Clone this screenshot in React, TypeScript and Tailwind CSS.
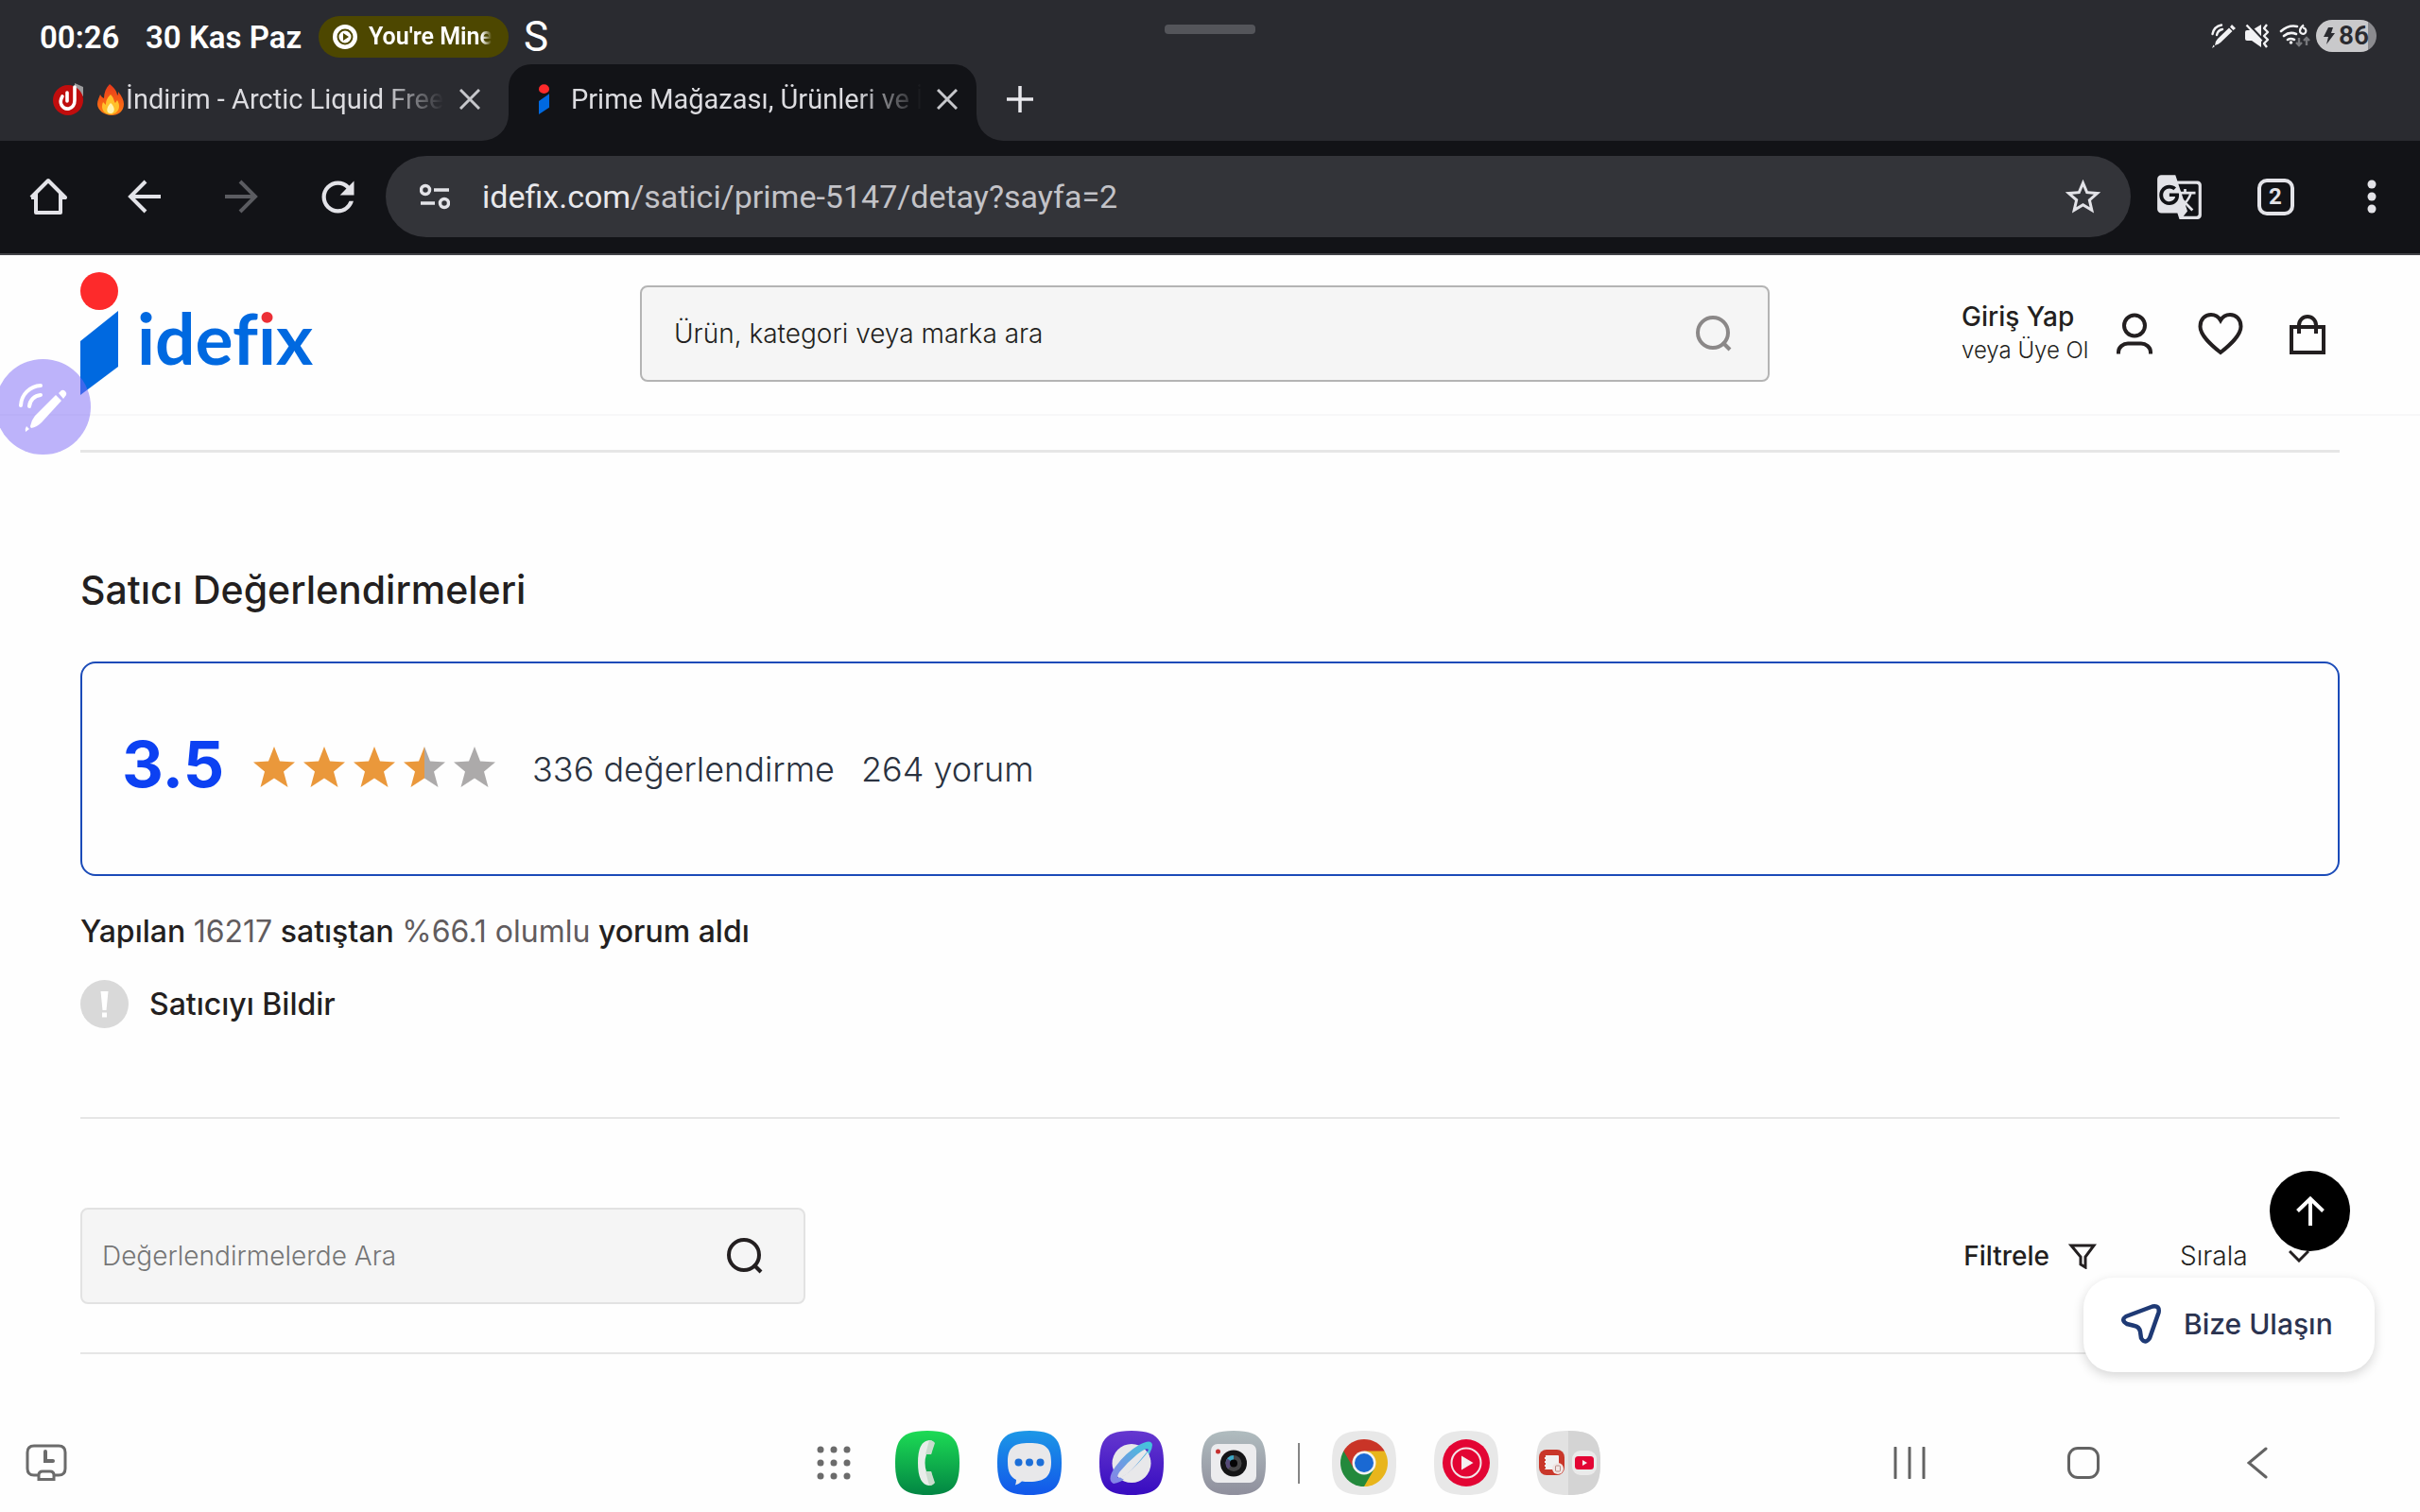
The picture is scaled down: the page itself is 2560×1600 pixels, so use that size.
import React from "react";
import { MdGTranslate, MdRefresh, MdStarBorder } from "react-icons/md";

const SQUIRCLE = "M34 0C60 0 68 8 68 34S60 68 34 68 0 60 0 34 8 0 34 0Z";

function PenSignal({ className }: { className: string }) {
  return (
    <svg viewBox="0 0 52 52" className={className} fill="none" aria-hidden="true">
      <path d="M2 24A22 22 0 0 1 23 3M11 25A13 13 0 0 1 23 13" stroke="currentColor" strokeWidth="4" strokeLinecap="round" />
      <path d="M39 13l6 6-21 23q-5 5-11 6-1-1-1-2 1-6 5-11z" fill="currentColor" />
      <path d="M42 11l3-3q2-1 4 1t1 4l-3 4zM8 46l3 3-4 3q-1-3 1-6z" fill="currentColor" />
    </svg>
  );
}

function StatusPen() {
  return (
    <svg viewBox="0 0 26 26" className="h-[26px] w-[26px]" fill="none" aria-hidden="true">
      <path d="M1.500 11Q3 3 11 1.500M6 12Q7 7 12 6" stroke="#f2f2f4" strokeWidth="2.400" strokeLinecap="round" />
      <path d="M19 4.500l3.500 3.500L10 20q-2 2-6 3 0-4 3-7zM20 3.500L22 1l4 4-2.500 2zM2.500 22.500L4 24l-3 2z" fill="#f2f2f4" />
    </svg>
  );
}

function MuteIcon() {
  return (
    <svg viewBox="0 0 26 26" className="h-[26px] w-[26px]" fill="none" aria-hidden="true">
      <path d="M0 9q0-2 2-2h5l10-6v24l-10-7H2q-2 0-2-2z" fill="#f2f2f4" />
      <path d="M3 0l16 17" stroke="#2a2b30" strokeWidth="2.400" />
      <path d="M1.500 1.500l16 17" stroke="#f2f2f4" strokeWidth="2.400" />
      <path d="M23 1l-3 4 4 4-4 4 4 4-4 4 3 4" stroke="#f2f2f4" strokeWidth="2.4" strokeLinejoin="round" />
    </svg>
  );
}

function WifiIcon() {
  return (
    <svg viewBox="0 0 34 26" className="h-[26px] w-[34px]" fill="none" aria-hidden="true">
      <path d="M2 8q8-7 17-5M5 13q6-5 13-2M9 17q3-2 7 0" stroke="#f2f2f4" strokeWidth="2.6" strokeLinecap="round" />
      <circle cx="12.500" cy="20" r="1.800" fill="#f2f2f4" />
      <path d="M26 1.500q-4 3-4 6a3.200 3.200 0 1 0 3-3" stroke="#f2f2f4" strokeWidth="2.200" />
      <path d="M21 15v8m-3-3l3 3 3-3M29 23v-8m-3 3l3-3 3 3" stroke="#77787c" strokeWidth="2.400" />
    </svg>
  );
}

function StatusBar() {
  return (
    <div className="relative flex h-[68px] items-start bg-[#2a2b30] pl-[42px] pr-[46px] pt-4 text-white">
      <div className="flex h-[46px] items-center text-[33px] font-semibold leading-none">
        <span className="w-28">00:26</span>
        <span className="w-[183px]">30 Kas Paz</span>
        <span className="flex h-11 w-[201px] items-center gap-3 rounded-full bg-[#4d4700] pl-[15px]">
          <svg viewBox="0 0 26 26" className="h-[26px] w-[26px] shrink-0" aria-hidden="true">
            <circle cx="13" cy="13" r="13" fill="#fff" />
            <circle cx="13" cy="13" r="7.500" fill="none" stroke="#4d4700" strokeWidth="2" />
            <path d="M11 9l6 4-6 4z" fill="#4d4700" />
          </svg>
          <span className="w-[130px] overflow-hidden whitespace-nowrap text-[25px] leading-8 [mask-image:linear-gradient(to_right,black_92%,transparent)]">
            You're Mine
          </span>
        </span>
        <span className="ml-4 text-[44px] font-normal leading-none">S</span>
      </div>
      <div className="absolute left-1/2 top-[26px] h-[10px] w-24 -translate-x-1/2 rounded-[4px] bg-[#54555a]" />
      <div className="ml-auto flex h-11 items-center gap-[10px]">
        <StatusPen />
        <MuteIcon />
        <div className="flex items-center gap-[5px]">
          <WifiIcon />
          <span className="flex h-[34px] w-16 items-center justify-center gap-1 rounded-full bg-linear-to-r from-[#c9c9cb] from-86% to-[#8b8b8f] to-86% text-[28px] font-semibold leading-none text-[#2a2b30]">
            <svg viewBox="0 0 12 18" className="h-[18px] w-3" aria-hidden="true">
              <path d="M5 0h5L8 6h4L3 18l2-8H0z" fill="currentColor" />
            </svg>
            86
          </span>
        </div>
      </div>
    </div>
  );
}

function CloseIcon() {
  return (
    <svg viewBox="0 0 22 22" className="h-[22px] w-[22px]" aria-hidden="true">
      <path d="M1 1l20 20M21 1L1 21" stroke="#c6c7cb" strokeWidth="3" />
    </svg>
  );
}

function TabStrip() {
  return (
    <div className="flex h-[81px] bg-[#121317] text-[29px] text-[#dcdce0]">
      <div className="flex w-[538px] items-center rounded-br-[28px] bg-[#2a2b30] pb-2 pl-[55px]">
        <svg viewBox="0 0 34 34" className="h-[34px] w-[34px] shrink-0" aria-hidden="true">
          <path d="M24 0l9 4v10l-9-6z" fill="#9b9b9d" />
          <circle cx="17" cy="18" r="16" fill="#c00d0d" />
          <path d="M11 14q-3 5-1 9 3 5 8 4 6-2 6-9V4M16 10v9" stroke="#fff" strokeWidth="3.600" fill="none" strokeLinecap="round" />
        </svg>
        <svg viewBox="0 0 28 34" className="ml-[14px] h-[34px] w-7 shrink-0" aria-hidden="true">
          <defs>
            <linearGradient id="flame" x1="0" y1="0" x2="0" y2="1">
              <stop offset="0" stopColor="#e8381b" />
              <stop offset="1" stopColor="#ff7d12" />
            </linearGradient>
          </defs>
          <path d="M13 1c5 4 8 8 8 12 1-1 1-2 1-4 4 5 6 9 6 13 0 8-6 12-13 12S0 29 0 22c0-4 2-7 3-10 1 2 2 3 4 4 0-6 2-11 6-15z" fill="url(#flame)" />
          <path d="M14 12c4 4 3 7 5 9l2-3c5 8 0 15-7 15S3 27 6 20l3 3c0-4 1-7 5-11z" fill="#ffc02b" />
          <path d="M14 21c5 4 5 11 0 11s-5-6 0-11z" fill="#fff3b0" />
        </svg>
        <span className="ml-[2px] w-[340px] overflow-hidden whitespace-nowrap leading-10 [mask-image:linear-gradient(to_right,black_80%,transparent_99%)]">
          İndirim - Arctic Liquid Freezer
        </span>
        <button type="button" aria-label="Sekmeyi kapat" className="ml-[13px]">
          <CloseIcon />
        </button>
      </div>
      <div className="w-[495px] bg-[#2a2b30]">
        <div className="flex h-full items-center rounded-t-[24px] bg-[#121317] pb-2 pl-8">
          <svg viewBox="0 0 40 131" className="h-8 w-[11px]" preserveAspectRatio="none" aria-hidden="true">
            <circle cx="20" cy="21" r="20" fill="#fd2a2b" />
            <path d="M0 74L40 42V101L0 131z" fill="#0069e0" />
          </svg>
          <span className="ml-[23px] w-[375px] overflow-hidden whitespace-nowrap leading-10 [mask-image:linear-gradient(to_right,black_80%,transparent_99%)]">
            Prime Mağazası, Ürünleri ve İndirimleri
          </span>
          <button type="button" aria-label="Sekmeyi kapat" className="ml-[12px]">
            <CloseIcon />
          </button>
        </div>
      </div>
      <div className="flex flex-1 items-center rounded-bl-[28px] bg-[#2a2b30] pb-2 pl-[31px]">
        <button type="button" aria-label="Yeni sekme">
          <svg viewBox="0 0 30 30" className="h-[30px] w-[30px]" aria-hidden="true">
            <path d="M15 1v28M1 15h28" stroke="#e8e8ec" strokeWidth="3.500" />
          </svg>
        </button>
      </div>
    </div>
  );
}

function ToolButton({ label, children }: { label: string; children: React.ReactNode }) {
  return (
    <button type="button" aria-label={label} className="flex h-[86px] w-[102px] shrink-0 items-center justify-center text-[#e3e3e8]">
      {children}
    </button>
  );
}

function Toolbar() {
  return (
    <div className="flex items-center border-b-2 border-[#414247] bg-[#121317] pb-[17px] pt-4">
      <ToolButton label="Ana sayfa">
        <svg viewBox="0 0 40 40" className="h-10 w-10" fill="none" stroke="currentColor" strokeWidth="4" strokeLinejoin="round" aria-hidden="true">
          <path d="M7 17V37H33V17M2 21L20 3L38 21H33M7 21H2" />
        </svg>
      </ToolButton>
      <ToolButton label="Geri">
        <svg viewBox="0 0 36 36" className="h-9 w-9" fill="none" stroke="currentColor" strokeWidth="4" aria-hidden="true">
          <path d="M35 18H4M19 2L3 18l16 16" />
        </svg>
      </ToolButton>
      <ToolButton label="İleri">
        <svg viewBox="0 0 36 36" className="h-9 w-9 text-[#5b5c61]" fill="none" stroke="currentColor" strokeWidth="4" aria-hidden="true">
          <path d="M1 18h31M17 2l16 16-16 16" />
        </svg>
      </ToolButton>
      <ToolButton label="Yenile">
        <MdRefresh className="h-[51px] w-[51px]" />
      </ToolButton>
      <div className="flex h-[86px] flex-1 items-center rounded-full bg-[#333439] pl-9">
        <button type="button" aria-label="Site bilgileri">
          <svg viewBox="0 0 32 28" className="h-7 w-8" fill="none" stroke="#e3e3e8" strokeWidth="3.500" aria-hidden="true">
            <circle cx="6" cy="7" r="4.500" />
            <circle cx="26" cy="21" r="4.500" />
            <path d="M15 7h16M1 21h15" />
          </svg>
        </button>
        <div className="ml-[34px] flex-1 whitespace-nowrap text-[34px] leading-[44px] text-[#c3c3c8]">
          <span className="text-[#e8e8ec]">idefix.com</span>/satici/prime-5147/detay?sayfa=2
        </div>
        <ToolButton label="Yer işareti ekle">
          <MdStarBorder className="h-[45px] w-[45px]" />
        </ToolButton>
      </div>
      <ToolButton label="Çevir">
        <MdGTranslate className="h-[51px] w-[51px]" />
      </ToolButton>
      <ToolButton label="Sekmeler">
        <span className="flex h-[39px] w-[39px] items-center justify-center rounded-[10px] border-4 border-current text-[24px] font-bold leading-none">2</span>
      </ToolButton>
      <ToolButton label="Menü">
        <svg viewBox="0 0 10 36" className="h-9 w-[10px]" fill="currentColor" aria-hidden="true">
          <circle cx="5" cy="5" r="4.500" />
          <circle cx="5" cy="18" r="4.500" />
          <circle cx="5" cy="31" r="4.500" />
        </svg>
      </ToolButton>
    </div>
  );
}

function SearchGlyph({ className }: { className: string }) {
  return (
    <svg viewBox="0 0 38 38" className={className} fill="none" stroke="currentColor" strokeWidth="4" aria-hidden="true">
      <circle cx="18" cy="18" r="16" />
      <path d="M28 28l8 8" />
    </svg>
  );
}

function SiteHeader() {
  return (
    <header className="flex h-[170px] items-start border-b-2 border-[#f7f7f8] px-[85px]">
      <div className="w-[592px] pt-[17px]">
        <a href="#anasayfa" className="flex w-fit items-start">
          <svg viewBox="0 0 40 131" className="h-[131px] w-10" aria-hidden="true">
            <circle cx="20" cy="21" r="20" fill="#fd2a2b" />
            <path d="M0 74L40 42V101L0 131z" fill="#0069e0" />
          </svg>
          <span className="ml-5 mt-7 font-['Lato'] text-[75px] font-bold leading-[84px] text-[#0069e0]">
            <span>idef</span>
            <span className="inline-block bg-linear-to-b from-[#ec2f36] from-38% to-[#0069e0] to-38% bg-clip-text text-transparent">i</span>
            <span>x</span>
          </span>
        </a>
      </div>
      <form className="relative mt-8 w-1/2">
        <input
          aria-label="Ürün, kategori veya marka ara"
          placeholder="Ürün, kategori veya marka ara"
          className="h-[102px] w-full rounded-[8px] border-2 border-[#b4b4b4] bg-[#f5f5f5] pl-[34px] text-[28px] font-light placeholder:text-[#231f20] placeholder:opacity-100"
        />
        <button type="button" aria-label="Ara" className="absolute right-10 top-8 text-[#8b8888]">
          <SearchGlyph className="h-[38px] w-[38px]" />
        </button>
      </form>
      <div className="ml-auto mr-[14px] mt-[47px] flex items-center text-[#231f20]">
        <a href="#giris" className="w-[164px] whitespace-nowrap">
          <span className="block text-[28px] font-medium leading-9">Giriş Yap</span>
          <span className="block text-[24px] font-light leading-9">veya Üye Ol</span>
        </a>
        <button type="button" aria-label="Hesabım">
          <svg viewBox="0 0 38 44" className="h-11 w-[38px]" fill="none" stroke="currentColor" strokeWidth="4" aria-hidden="true">
            <circle cx="19" cy="13.500" r="11" />
            <path d="M2 43.500v-2c0-5 5-9 10-9h14c5 0 10 4 10 9v2" />
          </svg>
        </button>
        <button type="button" aria-label="Favorilerim" className="ml-12">
          <svg viewBox="0 0 48 46" className="h-[46px] w-12" fill="none" stroke="currentColor" strokeWidth="4" aria-hidden="true">
            <path d="M24 43C14 35 2.500 25 2.500 15.500 2.500 8 7.500 3 14 3c4.500 0 8 2.500 10 6 2-3.500 5.500-6 10-6 6.500 0 11.500 5 11.500 12.500C45.500 25 34 35 24 43z" />
          </svg>
        </button>
        <button type="button" aria-label="Sepetim" className="ml-12">
          <svg viewBox="0 0 40 44" className="h-11 w-10" fill="none" stroke="currentColor" strokeWidth="4" aria-hidden="true">
            <path d="M3 15h34v27H3zM11 22v-9c0-5 4-9 9-9s9 4 9 9v9" />
          </svg>
        </button>
      </div>
    </header>
  );
}

const STARS = [100, 100, 100, 50, 0];

function Star({ fill }: { fill: number }) {
  const shape = "M22 0L28 15.500 44 16.500 32 26.500 36.500 43 22 33.500 7.500 43 12 26.500 0 16.500 16 15.500Z";
  return (
    <svg viewBox="0 0 44 43" className="h-[43px] w-11" aria-hidden="true">
      <defs>
        <linearGradient id={"star" + fill}>
          <stop offset={fill + "%"} stopColor="#ea983b" />
          <stop offset={fill + "%"} stopColor="#acaaaa" />
        </linearGradient>
      </defs>
      <path d={shape} fill={"url(#star" + fill + ")"} />
    </svg>
  );
}

function SellerReviews() {
  return (
    <main className="px-[85px] pt-9 text-[#231f20]">
      <hr className="h-[3px] border-0 bg-[#e6e6e6]" />
      <h1 className="mt-[121px] text-[41px] font-medium leading-[48px]">Satıcı Değerlendirmeleri</h1>
      <section className="mt-[52px] flex h-[227px] items-center rounded-[16px] border-2 border-[#1b4bb8] pl-[42px] text-[36px] font-light text-[#2a3240]">
        <strong className="mb-3 w-[139px] text-[68px] font-bold leading-[88px] text-[#0c41f2]">3.5</strong>
        <div role="img" aria-label="5 üzerinden 3.5" className="mb-1 flex gap-[9px]">
          {STARS.map((fill, i) => (
            <Star key={i} fill={fill} />
          ))}
        </div>
        <span className="ml-[39px]">336 değerlendirme</span>
        <span className="ml-7">264 yorum</span>
      </section>
      <p className="mt-[39px] text-[32px] font-medium leading-10">
        Yapılan <span className="font-normal text-[#615c5e]">16217</span> satıştan{" "}
        <span className="font-normal text-[#615c5e]">%66.1 olumlu</span> yorum aldı
      </p>
      <button type="button" className="mt-[31px] flex items-center gap-[22px] text-[32px] font-medium leading-[51px]">
        <svg viewBox="0 0 51 51" className="h-[51px] w-[51px]" aria-hidden="true">
          <circle cx="25.500" cy="25.500" r="25.500" fill="#d9d9d9" />
          <path d="M21.500 12h8l-2 20h-4zM23 34.500h5v5h-5z" fill="#fff" />
        </svg>
        Satıcıyı Bildir
      </button>
      <hr className="mt-[94px] h-[2px] border-0 bg-[#e6e6e6]" />
      <div className="mt-[94px] flex items-center">
        <form className="relative w-[767px]">
          <input
            aria-label="Değerlendirmelerde Ara"
            placeholder="Değerlendirmelerde Ara"
            className="h-[102px] w-full rounded-[8px] border-2 border-[#e2e2e2] bg-[#f5f5f5] pl-[21px] text-[28px] font-light placeholder:text-[#757575] placeholder:opacity-100"
          />
          <button type="button" aria-label="Ara" className="absolute right-[45px] top-8">
            <SearchGlyph className="h-[38px] w-[38px]" />
          </button>
        </form>
        <button type="button" className="ml-auto flex items-center gap-5 text-[28px] font-medium">
          Filtrele
          <svg viewBox="0 0 30 27" className="h-[27px] w-[30px]" fill="none" stroke="currentColor" strokeWidth="3" aria-hidden="true">
            <path d="M3 2h24L18 14v11l-5-3v-8z" />
          </svg>
        </button>
        <label className="relative ml-[88px] mr-8 flex items-center">
          <select aria-label="Sırala" className="w-[137px] appearance-none bg-transparent text-[28px] font-light">
            <option>Sırala</option>
          </select>
          <svg viewBox="0 0 22 13" className="pointer-events-none absolute right-0 h-[13px] w-[22px]" fill="none" stroke="currentColor" strokeWidth="3" aria-hidden="true">
            <path d="M1 1l10 10L21 1" />
          </svg>
        </label>
      </div>
      <hr className="mt-[51px] h-[2px] border-0 bg-[#e6e6e6]" />
    </main>
  );
}

function FloatingActions() {
  return (
    <>
      <button type="button" aria-label="Yukarı çık" className="absolute bottom-[276px] right-[74px] flex h-[85px] w-[85px] items-center justify-center rounded-full bg-black">
        <svg viewBox="0 0 30 31" className="h-[31px] w-[30px]" fill="none" stroke="#fff" strokeWidth="4" aria-hidden="true">
          <path d="M15 31V3M1.500 15.500L15 2.500l13.500 13" />
        </svg>
      </button>
      <button type="button" className="absolute bottom-[148px] right-12 flex h-[100px] w-[308px] items-center rounded-[32px] bg-white pb-[2px] pl-10 text-[30px] font-medium text-[#2b3350] shadow-[0_4px_12px_rgba(0,0,0,0.16)]">
        <svg viewBox="0 0 42 42" className="mr-6 h-[42px] w-[42px]" fill="none" stroke="#1f3a75" strokeWidth="4.500" strokeLinejoin="round" aria-hidden="true">
          <path d="M5 13L33 2.500Q41 1 39.500 9L30 36Q25 43 21 36L20 29Q19 24 14 23L6 21Q-1 17 5 13Z" />
        </svg>
        Bize Ulaşın
      </button>
      <button type="button" aria-label="Kalem menüsü" className="absolute -left-[5px] top-[380px] flex h-[101px] w-[101px] items-center justify-center rounded-full bg-[#7b67f5]/50 text-white">
        <PenSignal className="h-[52px] w-[52px]" />
      </button>
    </>
  );
}

function AppIcon({ label, children }: { label: string; children: React.ReactNode }) {
  return (
    <button type="button" aria-label={label}>
      <svg viewBox="0 0 68 68" className="h-[68px] w-[68px]" aria-hidden="true">
        {children}
      </svg>
    </button>
  );
}

function Gradient({ id, from, to }: { id: string; from: string; to: string }) {
  return (
    <linearGradient id={id} x1="0" y1="0" x2="0" y2="1">
      <stop offset="0" stopColor={from} />
      <stop offset="1" stopColor={to} />
    </linearGradient>
  );
}

const DOTS = [4, 18, 32];

function Dock() {
  return (
    <div className="flex items-center gap-10 pr-[3px]">
      <button type="button" aria-label="Uygulamalar" className="mr-[7px]">
        <svg viewBox="0 0 36 36" className="h-9 w-9" fill="#6b6b6b" aria-hidden="true">
          {DOTS.map((y) => DOTS.map((x) => <circle key={x + "-" + y} cx={x} cy={y} r="3.500" />))}
        </svg>
      </button>
      <AppIcon label="Telefon">
        <defs><Gradient id="phone" from="#1ddb55" to="#028543" /></defs>
        <path d={SQUIRCLE} fill="url(#phone)" />
        <path d="M36 10Q24 11 24 34T36 58Q39 58 40 56L38 43H33Q30 34 33 25H38L40 12Q39 10 36 10z" fill="#e9edea" />
        <path d="M36 10q4 0 6 3l-4 12h-6zM32 43h6l4 12q-2 3-6 3z" fill="#c9dccd" />
      </AppIcon>
      <AppIcon label="Mesajlar">
        <defs><Gradient id="messages" from="#1c97e6" to="#1257ea" /></defs>
        <path d={SQUIRCLE} fill="url(#messages)" />
        <path d="M34 13c17 0 23 5 23 20S51 54 34 54q-5 0-8-.5-3 3-7 4 1-3 1-5.500C14 49 11 44 11 33c0-15 6-20 23-20z" fill="#e8e8ea" />
        <circle cx="22.500" cy="33.500" r="4" fill="#1d6fd8" />
        <circle cx="34" cy="33.500" r="4" fill="#1d6fd8" />
        <circle cx="45.500" cy="33.500" r="4" fill="#1d6fd8" />
      </AppIcon>
      <AppIcon label="İnternet">
        <defs>
          <Gradient id="internet" from="#6538cf" to="#370bc0" />
          <linearGradient id="ring" x1="0" y1="1" x2="1" y2="0">
            <stop offset="0" stopColor="#8a80e8" />
            <stop offset="1" stopColor="#3fc8da" />
          </linearGradient>
        </defs>
        <path d={SQUIRCLE} fill="url(#internet)" />
        <circle cx="34" cy="34.500" r="20.500" fill="#e8e8ea" />
        <path d="M15 56Q7 52 17 38Q28 23 42 15Q55 8 56 15Q56 23 44 36Q28 54 15 56ZM20 50Q28 49 39 36T52 20Q50 17 40 25T21 44Q18 49 20 50Z" fill="url(#ring)" />
        <path d="M22 49.500Q30 46 39.500 36T51 22.500Q58 36 48 49Q36 59 22 49.500z" fill="#e8e8ea" />
      </AppIcon>
      <AppIcon label="Kamera">
        <defs><Gradient id="camera" from="#b0bcbf" to="#8f8f9d" /></defs>
        <path d={SQUIRCLE} fill="url(#camera)" />
        <rect x="10" y="14" width="48" height="41" rx="7" fill="#ececee" />
        <circle cx="17.500" cy="22" r="2.500" fill="#c5302f" />
        <circle cx="34" cy="34.500" r="14" fill="#151517" />
        <circle cx="34" cy="34.500" r="8.500" fill="#454547" />
        <path d="M25.500 34.500A8.500 8.500 0 0 1 34 26v8.500z" fill="#3aa6c4" />
        <path d="M25.500 34.500q0-3 2-5l6.500 5-6 6q-2.500-2-2.500-6z" fill="#574a78" />
        <circle cx="34" cy="34.500" r="4" fill="#050506" />
      </AppIcon>
      <div className="-mx-[6px] h-[43px] w-[2px] bg-[#858585]" />
      <AppIcon label="Chrome">
        <path d={SQUIRCLE} fill="#e8e8e8" />
        <path d="M34 34L12.350 21.500A25 25 0 0 1 55.650 21.500z" fill="#c93427" />
        <path d="M34 34l21.650-12.500A25 25 0 0 1 34 59z" fill="#e8b51c" />
        <path d="M34 34V59A25 25 0 0 1 12.350 21.500z" fill="#23893c" />
        <path d="M34 21.500H55.650L45 40z" fill="#e8b51c" />
        <path d="M23.200 40.250L12.350 21.500 34 21.500z" fill="#c93427" />
        <path d="M44.800 40.250L34 59 23.200 40.250z" fill="#23893c" />
        <circle cx="34" cy="34" r="12.500" fill="#f2f2f2" />
        <circle cx="34" cy="34" r="10" fill="#1a69d3" />
      </AppIcon>
      <AppIcon label="YouTube Music">
        <path d={SQUIRCLE} fill="#e8e8e8" />
        <circle cx="34" cy="34" r="25" fill="#e30534" />
        <circle cx="34" cy="34" r="15.500" fill="none" stroke="#f2e6e8" strokeWidth="2" />
        <path d="M29 26.500L41.500 34 29 41.500z" fill="#f4f0f0" />
      </AppIcon>
      <AppIcon label="Klasör">
        <path d={SQUIRCLE} fill="#e2e2e2" />
        <path d="M34 0C60 0 68 8 68 34S60 68 34 68z" fill="#d4d4d4" />
        <rect x="3" y="20" width="27" height="27" rx="8" fill="#c9372a" />
        <rect x="9" y="26" width="15" height="15" rx="1" fill="#f1f1f1" />
        <path d="M9 26v15" stroke="#c9372a" strokeWidth="2" strokeDasharray="2 2" />
        <circle cx="23" cy="40" r="6" fill="#f1e6e4" />
        <rect x="20.500" y="37" width="5" height="6" rx="1" fill="none" stroke="#b98a85" />
        <rect x="38" y="21" width="26" height="26" rx="9" fill="#eaeaea" />
        <rect x="41" y="27" width="20" height="14" rx="3.500" fill="#e30534" />
        <path d="M49 31l5 3-5 3z" fill="#f4f0f0" />
      </AppIcon>
    </div>
  );
}

function NavigationBar() {
  return (
    <nav className="absolute inset-x-0 bottom-0 grid h-[104px] grid-cols-[1fr_auto_1fr] items-center bg-[#fefefe]">
      <button type="button" aria-label="Son kullanılanlar" className="ml-[27px] w-fit">
        <svg viewBox="0 0 44 40" className="h-10 w-11" fill="none" stroke="#6b6b6b" strokeWidth="3" aria-hidden="true">
          <path d="M13 33H9q-7 0-7-7V9q0-7 7-7h26q7 0 7 7v17q0 7-7 7h-4" />
          <path d="M14 37.500V33q0-4 4-4h8q4 0 4 4v4.500z" />
          <path d="M21 8v10h8" strokeWidth="4" strokeLinecap="round" />
        </svg>
      </button>
      <Dock />
      <div className="flex justify-end pr-20">
        <button type="button" aria-label="Son uygulamalar" className="flex w-[184px] justify-center">
          <svg viewBox="0 0 34 34" className="h-[34px] w-[34px]" stroke="#636363" strokeWidth="3" aria-hidden="true">
            <path d="M2 1v32M17 1v32M32 1v32" strokeLinecap="round" />
          </svg>
        </button>
        <button type="button" aria-label="Ana ekran" className="flex w-[184px] justify-center">
          <span className="h-[34px] w-[34px] rounded-[11px] border-[3px] border-[#636363]" />
        </button>
        <button type="button" aria-label="Geri" className="flex w-[184px] justify-center">
          <svg viewBox="0 0 22 34" className="h-[34px] w-[22px]" fill="none" stroke="#636363" strokeWidth="3" strokeLinecap="round" aria-hidden="true">
            <path d="M20 2L2 17l18 15" />
          </svg>
        </button>
      </div>
    </nav>
  );
}

export default function App() {
  return (
    <div className="relative min-h-screen overflow-hidden bg-[#fefefe]">
      <div className="font-['Roboto',sans-serif]">
        <StatusBar />
        <TabStrip />
        <Toolbar />
      </div>
      <div className="pb-[167px] font-['Inter',sans-serif]">
        <SiteHeader />
        <SellerReviews />
        <FloatingActions />
      </div>
      <NavigationBar />
    </div>
  );
}
